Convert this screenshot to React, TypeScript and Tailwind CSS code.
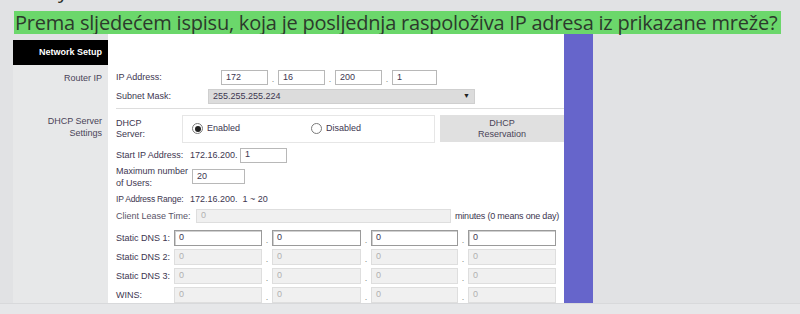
import React from 'react';

const label = 'text-[9px] leading-[11px] text-[#3d3650] whitespace-nowrap';

const Box = ({ value, w, disabled, strong }: { value: string; w: string; disabled?: boolean; strong?: boolean }) => (
  <div
    className={`${w} h-full flex items-center px-[4px] text-[9px] border ${
      disabled
        ? 'bg-[#f0f0f0] border-[#dedede] text-[#b0b0b0]'
        : strong
        ? 'bg-white border-[#9a9a9a] text-[#3d3650] shadow-[inset_1px_1px_0_#d0d0d0]'
        : 'bg-white border-[#b8b8b8] text-[#3d3650]'
    }`}
  >
    {value}
  </div>
);

const Dot = ({ w }: { w: string }) => (
  <div className={`${w} h-full flex items-end justify-center pb-[1px] text-[9px] leading-[9px] text-[#888]`}>.</div>
);

const DnsRow = ({ name, disabled, vals }: { name: string; disabled?: boolean; vals: string[] }) => (
  <div className="flex items-center h-[16px]">
    <div className={`${label} w-[58px]`}>{name}</div>
    <Box value={vals[0]} w="w-[88px]" disabled={disabled} strong={!disabled} />
    <Dot w="w-[10px]" />
    <Box value={vals[1]} w="w-[89px]" disabled={disabled} strong={!disabled} />
    <Dot w="w-[10px]" />
    <Box value={vals[2]} w="w-[87px]" disabled={disabled} strong={!disabled} />
    <Dot w="w-[10px]" />
    <Box value={vals[3]} w="w-[88px]" disabled={disabled} strong={!disabled} />
  </div>
);

const Radio = ({ on, text }: { on?: boolean; text: string }) => (
  <div className="flex items-center gap-[4px]">
    <div className="w-[11px] h-[11px] rounded-full border border-[#7a7a7a] bg-white flex items-center justify-center">
      {on && <div className="w-[6px] h-[6px] rounded-full bg-[#222]" />}
    </div>
    <span className={label}>{text}</span>
  </div>
);

export default function App() {
  return (
    <div className="w-[800px] h-[314px] bg-[#e1e2e4] overflow-hidden" style={{ fontFamily: '"Liberation Sans", Arial, sans-serif' }}>
      {/* tail of previous line */}
      <div className="h-[11px] overflow-hidden pl-[58px]">
        <span className="block -mt-[20px] text-[20px] leading-[22px] text-[#2b2f2b]" style={{ fontFamily: '"Open Sans", sans-serif' }}>
          y
        </span>
      </div>

      {/* question */}
      <div className="pl-[14px] h-[23px]">
        <span
          className="inline-block bg-[#6bd76b] text-[#2c3a2c] text-[20px] leading-[23px] pl-[1px] pr-[4px] tracking-[-0.22px]"
          style={{ fontFamily: '"Open Sans", sans-serif' }}
        >
          Prema sljedećem ispisu, koja je posljednja raspoloživa IP adresa iz prikazane mreže?
        </span>
      </div>

      {/* screenshot panel */}
      <div className="flex ml-[13px] h-[269px]">
        {/* left nav */}
        <div className="w-[95px] flex flex-col">
          <div className="h-[6px] bg-[#e1e2e4]" />
          <div className="h-[25px] bg-black flex items-center justify-end pr-[6px] text-white text-[9px] font-bold">Network Setup</div>
          <div className="flex-1 bg-[#e7e8e9] flex flex-col items-end pr-[6px]">
            <div className="text-[9px] leading-[11px] whitespace-nowrap mt-[8px] text-[#4a4458]">Router IP</div>
            <div className="text-[9px] whitespace-nowrap mt-[31px] text-right text-[#4a4458] leading-[12px]">
              DHCP Server
              <br />
              Settings
            </div>
          </div>
        </div>

        {/* main content */}
        <div className="w-[456px] bg-white pl-[8px] pt-[36px] flex flex-col">
          <div className="flex items-center h-[15px]">
            <div className={`${label} w-[105px]`}>IP Address:</div>
            <Box value="172" w="w-[47px]" />
            <Dot w="w-[10px]" />
            <Box value="16" w="w-[47px]" />
            <Dot w="w-[10px]" />
            <Box value="200" w="w-[47px]" />
            <Dot w="w-[10px]" />
            <Box value="1" w="w-[45px]" />
          </div>

          <div className="flex items-center h-[15px] mt-[4px]">
            <div className={`${label} w-[92px]`}>Subnet Mask:</div>
            <div className="w-[267px] h-full bg-[#dcdcdc] border border-[#cfcfcf] flex items-center justify-between px-[4px] text-[9px] text-[#3d3650]">
              <span>255.255.255.224</span>
              <span className="text-[7px] text-[#222]">▼</span>
            </div>
          </div>

          <div className="h-px bg-[#dddddd] mt-[4px]" />

          <div className="flex items-center h-[29px] mt-[6px]">
            <div className={`${label} w-[66px] leading-[11px]`}>
              DHCP
              <br />
              Server:
            </div>
            <div className="w-[253px] h-full border border-[#e6e6e6] flex items-center pl-[9px]">
              <div className="w-[119px]">
                <Radio on text="Enabled" />
              </div>
              <Radio text="Disabled" />
            </div>
            <div className="w-[124px] h-[27px] ml-[5px] bg-[#e0e0e0] flex flex-col items-center justify-center text-[9px] leading-[11px] text-[#4a4458]">
              <span>DHCP</span>
              <span>Reservation</span>
            </div>
          </div>

          <div className="flex items-center h-[15px] mt-[5px]">
            <div className={`${label} w-[74px]`}>Start IP Address:</div>
            <div className={`${label} w-[50px]`}>172.16.200.</div>
            <Box value="1" w="w-[47px]" />
          </div>

          <div className="flex items-center h-[24px] mt-[2px]">
            <div className={`${label} w-[76px] leading-[12px]`}>
              Maximum number
              <br />
              of Users:
            </div>
            <div className="h-[15px] flex">
              <Box value="20" w="w-[53px]" />
            </div>
          </div>

          <div className="flex items-center h-[12px] mt-[5px]">
            <div className="w-[74px] shrink-0 text-[8.5px] leading-[11px] text-[#3d3650] whitespace-nowrap tracking-[-0.2px]">IP Address Range:</div>
            <div className={label}>172.16.200.&nbsp;&nbsp;1&nbsp;~&nbsp;20</div>
          </div>

          <div className="flex items-center h-[14px] mt-[4px]">
            <div className="w-[80px] shrink-0 text-[9px] leading-[11px] whitespace-nowrap text-[#5a5468]">Client Lease Time:</div>
            <Box value="0" w="w-[255px]" disabled />
            <div className={`${label} ml-[4px] tracking-[-0.2px]`}>minutes (0 means one day)</div>
          </div>

          <div className="flex flex-col gap-[3px] mt-[7px]">
            <DnsRow name="Static DNS 1:" vals={['0', '0', '0', '0']} />
            <DnsRow name="Static DNS 2:" disabled vals={['0', '0', '0', '0']} />
            <DnsRow name="Static DNS 3:" disabled vals={['0', '0', '0', '0']} />
            <DnsRow name="WINS:" disabled vals={['0', '0', '0', '0']} />
          </div>
        </div>

        {/* purple bar */}
        <div className="w-[29px] bg-[#6665cb]" />
      </div>

      <div className="h-[11px] bg-[#e6e7e9] border-t border-[#d8d9db]" />
    </div>
  );
}
